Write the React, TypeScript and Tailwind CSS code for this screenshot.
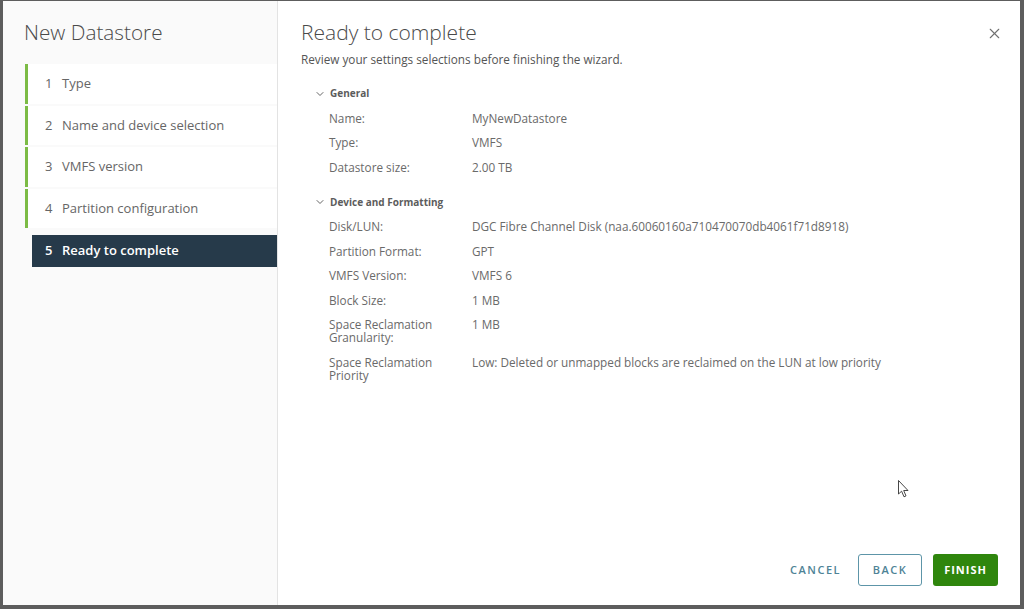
import { ChevronDown, X } from 'lucide-react'

type Row = { label: string; value: string }

const general: Row[] = [
  { label: 'Name:', value: 'MyNewDatastore' },
  { label: 'Type:', value: 'VMFS' },
  { label: 'Datastore size:', value: '2.00 TB' },
]

const device: Row[] = [
  { label: 'Disk/LUN:', value: 'DGC Fibre Channel Disk (naa.60060160a710470070db4061f71d8918)' },
  { label: 'Partition Format:', value: 'GPT' },
  { label: 'VMFS Version:', value: 'VMFS 6' },
  { label: 'Block Size:', value: '1 MB' },
  { label: 'Space Reclamation\nGranularity:', value: '1 MB' },
  { label: 'Space Reclamation\nPriority', value: 'Low: Deleted or unmapped blocks are reclaimed on the LUN at low priority' },
]

const steps = ['Type', 'Name and device selection', 'VMFS version', 'Partition configuration']

const Section = ({ title, rows }: { title: string; rows: Row[] }) => (
  <div>
    <div className="flex h-[25px] items-center gap-[4px] pl-[13px] text-[10px] font-bold text-[#5c5c5c]">
      <ChevronDown size={12} strokeWidth={2} className="text-[#666]" />
      {title}
    </div>
    {rows.map((row) => (
      <div key={row.label} className="flex py-[5.75px] pl-[28px] text-[11.75px] leading-[13px] text-[#6a6a6a]">
        <div className="w-[143px] shrink-0 whitespace-pre-line">{row.label}</div>
        <div>{row.value}</div>
      </div>
    ))}
  </div>
)

export default function App() {
  return (
    <div
      className="relative flex h-[609px] w-[1024px] bg-[#5d5d5d] pt-[1px] pr-[4px] pb-[4px] pl-[3px]"
      style={{ fontFamily: '"Open Sans", Lato, sans-serif' }}
    >
      <div className="flex flex-1 bg-white">
        {/* left nav */}
        <div className="w-[275px] shrink-0 border-r border-[#e3e3e3] bg-[#fafafa]">
          <h1 className="pt-[19px] pl-[21px] text-[20.75px] leading-[24px] font-light text-[#4a4a4a]">New Datastore</h1>
          <div className="mt-[20px] ml-[22px]">
            {steps.map((s, i) => (
              <div
                key={s}
                className="mb-[2px] flex h-[39.5px] items-center border-l-[3px] border-[#7cbb45] bg-white pl-[17px] text-[13px] text-[#666]"
              >
                <span className="w-[17px]">{i + 1}</span>
                {s}
              </div>
            ))}
            <div className="mt-[7px] ml-[7px] flex h-[32px] items-center bg-[#263a4a] pl-[13px] text-[13px] font-semibold text-white">
              <span className="w-[17px]">5</span>
              Ready to complete
            </div>
          </div>
        </div>

        {/* content */}
        <div className="flex flex-1 flex-col">
          <div className="flex items-start justify-between pt-[19px] pr-[17px] pl-[23px]">
            <h2 className="text-[21px] leading-[24px] font-light text-[#4a4a4a]">Ready to complete</h2>
            <X size={17} strokeWidth={1.5} className="mt-[5px] text-[#707070]" />
          </div>
          <p className="mt-[8px] pl-[23px] text-[11.75px] leading-[14px] text-[#555]">
            Review your settings selections before finishing the wizard.
          </p>
          <div className="mt-[15px] pl-[23px]">
            <Section title="General" rows={general} />
            <div className="mt-[10px]">
              <Section title="Device and Formatting" rows={device} />
            </div>
          </div>

          <div className="mt-auto flex items-center justify-end gap-[11px] pr-[22px] pb-[19px]">
            <button className="px-[6px] text-[11px] font-semibold tracking-[1.5px] text-[#4e8396]">CANCEL</button>
            <button className="h-[32px] w-[64px] rounded-[3px] border border-[#5d95a8] text-[11px] font-semibold tracking-[1.5px] text-[#4e8396]">
              BACK
            </button>
            <button className="h-[32px] w-[65px] rounded-[3px] bg-[#2f860d] text-[11px] font-bold tracking-[1px] text-white">
              FINISH
            </button>
          </div>
        </div>
      </div>

      {/* mouse pointer */}
      <svg className="absolute top-[480px] left-[898px]" width="12" height="19" viewBox="0 0 12 19">
        <path d="M0.5 0.5 L0.5 14 L3.6 11.2 L6 16.8 L8 15.9 L5.7 10.5 L10 10.5 Z" fill="white" stroke="#333" strokeWidth="0.9" />
      </svg>
    </div>
  )
}
